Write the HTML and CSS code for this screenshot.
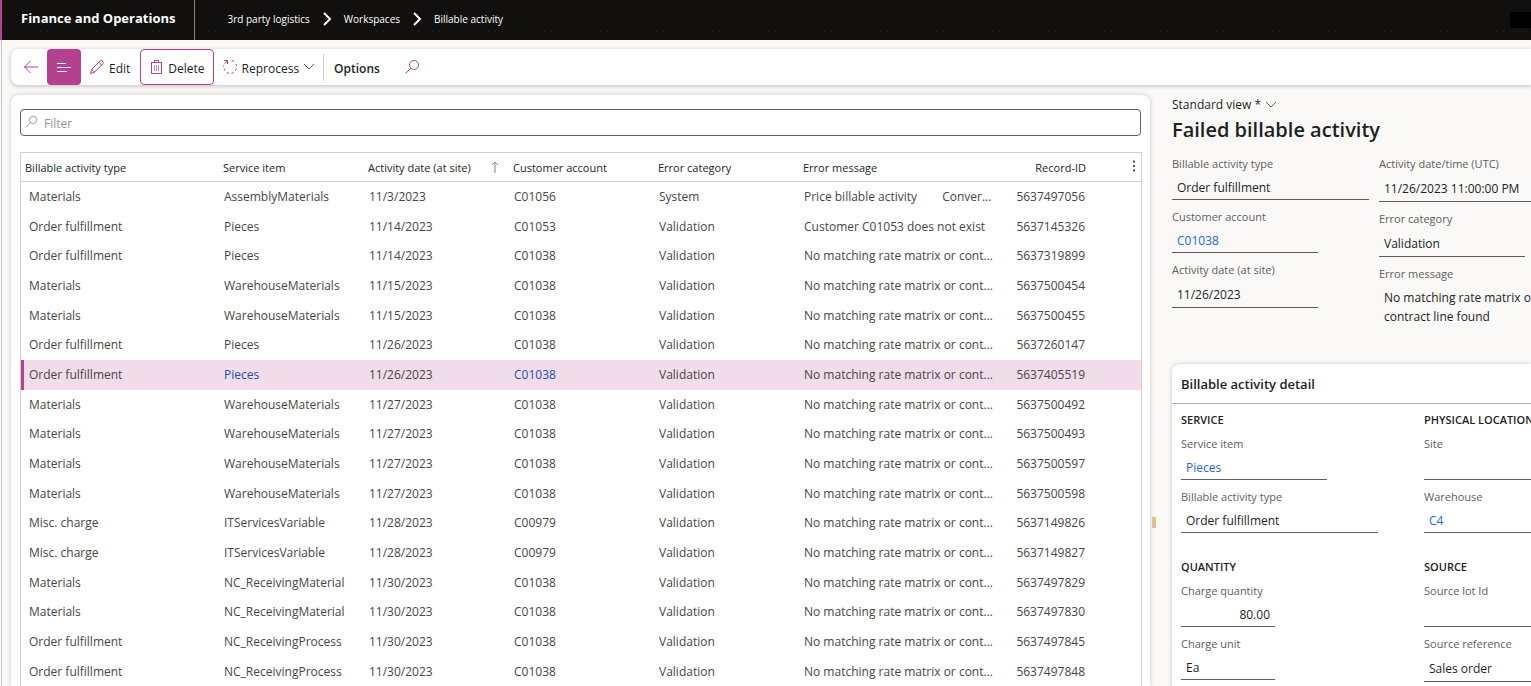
FILE: index.html
```html
<!DOCTYPE html>
<html lang="en">
<head>
  <meta charset="UTF-8" />
  <meta name="viewport" content="width=device-width, initial-scale=1.0" />
  <title>Billable activity</title>
  <link rel="stylesheet" href="styles.css">
</head>
<body>
  <header class="topbar">
    <div class="brand">Finance and Operations</div>
    <nav class="breadcrumb">
      <a href="#">3rd party logistics</a>
      <svg class="crumb-sep" viewBox="0 0 8 14"><path d="M1 1l6 6-6 6" /></svg>
      <a href="#">Workspaces</a>
      <svg class="crumb-sep" viewBox="0 0 8 14"><path d="M1 1l6 6-6 6" /></svg>
      <a href="#">Billable activity</a>
    </nav>
    <div class="account"></div>
  </header>

  <main class="page">
    <div class="toolbar">
      <button class="tool back" aria-label="Back">
        <svg class="icon" viewBox="0 0 16 16"><path d="M1 8h14M7.500 2L1.500 8l6 6" /></svg>
      </button>
      <button class="tool list-toggle" aria-label="Show list">
        <svg class="icon" viewBox="0 0 16 16"><path d="M1 4.500h9M1 8.500h14M1 12.500h10" /></svg>
      </button>
      <button class="tool edit">
        <svg class="icon" viewBox="0 0 16 16"><path d="M1.500 14.500l1.200-4.200 8.300-8.300q1.300-1.100 2.600.1t.3 2.700l-8.300 8.300zM9.800 3.200l3 3M2.700 10.300l2.900 2.900" /></svg>
        Edit
      </button>
      <button class="tool delete">
        <svg class="icon" viewBox="0 0 16 16"><path d="M3 3.500h11M6.500 3.500v-2h4v2M3.500 3.500v11h10v-11" /><path class="thin" d="M6.500 6v6M8.500 6v6M10.500 6v6" /></svg>
        Delete
      </button>
      <button class="tool reprocess">
        <svg class="icon" viewBox="0 0 16 16"><path d="M2 1.500h3.500v3.500M5.500 1.500L2.500 4.500M10 1.500l2 1M14 5l.500 2M14.500 9.500l-1 2M11.500 13.500l-2 1M7 14.500l-2-1M3 11.500l-1-2M1.500 7.500v-1" /></svg>
        Reprocess
        <svg class="chevron" viewBox="0 0 12 8"><path d="M1 1l5 5 5-5" /></svg>
      </button>
      <span class="divider"></span>
      <button class="tool options">Options</button>
      <button class="tool search" aria-label="Search">
        <svg class="icon" viewBox="0 0 16 16"><circle cx="10" cy="6" r="4.500" /><path d="M6.800 9.200L1.500 14.500" /></svg>
      </button>
    </div>

    <div class="content">
      <section class="list">
        <div class="filter">
          <svg class="icon" viewBox="0 0 16 16"><circle cx="10" cy="6" r="4.500" /><path d="M6.800 9.200L1.500 14.500" /></svg>
          <input type="text" placeholder="Filter" aria-label="Filter" />
        </div>
        <table class="grid">
          <colgroup>
            <col class="col-type" /><col class="col-item" /><col class="col-date" /><col class="col-account" />
            <col class="col-category" /><col class="col-message" /><col class="col-record" /><col class="col-menu" />
          </colgroup>
          <thead>
            <tr>
              <th>Billable activity type</th>
              <th>Service item</th>
              <th>
                <div class="sorted">Activity date (at site)
                  <svg class="sort" viewBox="0 0 8 12"><path d="M4 12V1M1 4l3-3 3 3" /></svg>
                </div>
              </th>
              <th>Customer account</th>
              <th>Error category</th>
              <th>Error message</th>
              <th class="num">Record-ID</th>
              <th class="menu">
                <button class="more" aria-label="Grid options">
                  <svg viewBox="0 0 4 12"><circle cx="2" cy="1.500" r="1" /><circle cx="2" cy="6" r="1" /><circle cx="2" cy="10.500" r="1" /></svg>
                </button>
              </th>
            </tr>
          </thead>
          <tbody>
            <tr><td>Materials</td><td>AssemblyMaterials</td><td>11/3/2023</td><td>C01056</td><td>System</td><td><span class="source">Price billable activity</span>Conver...</td><td class="num">5637497056</td><td></td></tr>
            <tr><td>Order fulfillment</td><td>Pieces</td><td>11/14/2023</td><td>C01053</td><td>Validation</td><td>Customer C01053 does not exist</td><td class="num">5637145326</td><td></td></tr>
            <tr><td>Order fulfillment</td><td>Pieces</td><td>11/14/2023</td><td>C01038</td><td>Validation</td><td>No matching rate matrix or cont...</td><td class="num">5637319899</td><td></td></tr>
            <tr><td>Materials</td><td>WarehouseMaterials</td><td>11/15/2023</td><td>C01038</td><td>Validation</td><td>No matching rate matrix or cont...</td><td class="num">5637500454</td><td></td></tr>
            <tr><td>Materials</td><td>WarehouseMaterials</td><td>11/15/2023</td><td>C01038</td><td>Validation</td><td>No matching rate matrix or cont...</td><td class="num">5637500455</td><td></td></tr>
            <tr><td>Order fulfillment</td><td>Pieces</td><td>11/26/2023</td><td>C01038</td><td>Validation</td><td>No matching rate matrix or cont...</td><td class="num">5637260147</td><td></td></tr>
            <tr class="selected"><td>Order fulfillment</td><td><a href="#">Pieces</a></td><td>11/26/2023</td><td><a href="#">C01038</a></td><td>Validation</td><td>No matching rate matrix or cont...</td><td class="num">5637405519</td><td></td></tr>
            <tr><td>Materials</td><td>WarehouseMaterials</td><td>11/27/2023</td><td>C01038</td><td>Validation</td><td>No matching rate matrix or cont...</td><td class="num">5637500492</td><td></td></tr>
            <tr><td>Materials</td><td>WarehouseMaterials</td><td>11/27/2023</td><td>C01038</td><td>Validation</td><td>No matching rate matrix or cont...</td><td class="num">5637500493</td><td></td></tr>
            <tr><td>Materials</td><td>WarehouseMaterials</td><td>11/27/2023</td><td>C01038</td><td>Validation</td><td>No matching rate matrix or cont...</td><td class="num">5637500597</td><td></td></tr>
            <tr><td>Materials</td><td>WarehouseMaterials</td><td>11/27/2023</td><td>C01038</td><td>Validation</td><td>No matching rate matrix or cont...</td><td class="num">5637500598</td><td></td></tr>
            <tr><td>Misc. charge</td><td>ITServicesVariable</td><td>11/28/2023</td><td>C00979</td><td>Validation</td><td>No matching rate matrix or cont...</td><td class="num">5637149826</td><td></td></tr>
            <tr><td>Misc. charge</td><td>ITServicesVariable</td><td>11/28/2023</td><td>C00979</td><td>Validation</td><td>No matching rate matrix or cont...</td><td class="num">5637149827</td><td></td></tr>
            <tr><td>Materials</td><td>NC_ReceivingMaterial</td><td>11/30/2023</td><td>C01038</td><td>Validation</td><td>No matching rate matrix or cont...</td><td class="num">5637497829</td><td></td></tr>
            <tr><td>Materials</td><td>NC_ReceivingMaterial</td><td>11/30/2023</td><td>C01038</td><td>Validation</td><td>No matching rate matrix or cont...</td><td class="num">5637497830</td><td></td></tr>
            <tr><td>Order fulfillment</td><td>NC_ReceivingProcess</td><td>11/30/2023</td><td>C01038</td><td>Validation</td><td>No matching rate matrix or cont...</td><td class="num">5637497845</td><td></td></tr>
            <tr><td>Order fulfillment</td><td>NC_ReceivingProcess</td><td>11/30/2023</td><td>C01038</td><td>Validation</td><td>No matching rate matrix or cont...</td><td class="num">5637497848</td><td></td></tr>
          </tbody>
        </table>
      </section>

      <div class="splitter"><span class="grip"></span></div>

      <section class="details">
        <button class="view">Standard view *
          <svg class="chevron" viewBox="0 0 12 8"><path d="M1 1l5 5 5-5" /></svg>
        </button>
        <h1>Failed billable activity</h1>
        <div class="summary">
          <div class="fields">
            <div class="field wide">
              <label for="sumType">Billable activity type</label>
              <input type="text" id="sumType" value="Order fulfillment" readonly />
            </div>
            <div class="field">
              <span class="label" id="sumAccount">Customer account</span>
              <a class="value" href="#" aria-describedby="sumAccount">C01038</a>
            </div>
            <div class="field tall">
              <label for="sumDate">Activity date (at site)</label>
              <input type="text" id="sumDate" value="11/26/2023" readonly />
            </div>
          </div>
          <div class="fields tall">
            <div class="field wide">
              <label for="sumTime">Activity date/time (UTC)</label>
              <input type="text" id="sumTime" value="11/26/2023 11:00:00 PM" readonly />
            </div>
            <div class="field">
              <label for="sumCategory">Error category</label>
              <input type="text" id="sumCategory" value="Validation" readonly />
            </div>
            <div class="field wide">
              <label for="sumMessage">Error message</label>
              <textarea id="sumMessage" rows="2" readonly>No matching rate matrix or contract line found</textarea>
            </div>
          </div>
        </div>

        <div class="card">
          <h2>Billable activity detail</h2>
          <div class="groups">
            <div class="fields">
              <h3>SERVICE</h3>
              <div class="field">
                <span class="label" id="detItem">Service item</span>
                <a class="value" href="#" aria-describedby="detItem">Pieces</a>
              </div>
              <div class="field wide">
                <label for="detType">Billable activity type</label>
                <input type="text" id="detType" value="Order fulfillment" readonly />
              </div>
            </div>
            <div class="fields">
              <h3>PHYSICAL LOCATION</h3>
              <div class="field">
                <label for="detSite">Site</label>
                <input type="text" id="detSite" readonly />
              </div>
              <div class="field">
                <span class="label" id="detWarehouse">Warehouse</span>
                <a class="value" href="#" aria-describedby="detWarehouse">C4</a>
              </div>
            </div>
            <div class="fields">
              <h3>QUANTITY</h3>
              <div class="field short">
                <label for="detQty">Charge quantity</label>
                <input type="text" class="num" id="detQty" value="80.00" readonly />
              </div>
              <div class="field short">
                <label for="detUnit">Charge unit</label>
                <input type="text" id="detUnit" value="Ea" readonly />
              </div>
            </div>
            <div class="fields">
              <h3>SOURCE</h3>
              <div class="field">
                <label for="detLot">Source lot Id</label>
                <input type="text" id="detLot" readonly />
              </div>
              <div class="field tall">
                <label for="detRef">Source reference</label>
                <input type="text" id="detRef" value="Sales order" readonly />
              </div>
            </div>
          </div>
        </div>
      </section>
    </div>
  </main>
</body>
</html>
```
FILE: styles.css
```css
:root {
  --accent: #b4408f;
  --accent-light: #f1dcea;
  --page-bg: #faf9f8;
  --text: #201f1e;
  --label: #605e5c;
  --line: #d2d0ce;
  --link: #2266e3;
}

* {
  margin: 0;
  padding: 0;
  box-sizing: border-box;
}

body {
  display: flex;
  flex-direction: column;
  height: 100vh;
  overflow: hidden;
  background: var(--page-bg);
  color: var(--text);
  font-family: "Open Sans", "Noto Sans", sans-serif;
  font-size: 12px;
  line-height: 16px;
}

button, input, textarea {
  border: none;
  background: transparent;
  color: inherit;
  font: inherit;
  outline: none;
}

button {
  cursor: pointer;
}

a {
  color: var(--link);
  text-decoration: none;
}

svg {
  flex: none;
  fill: none;
  stroke: currentColor;
}

.icon {
  width: 16px;
  height: 16px;
}

.chevron {
  width: 12px;
  height: 8px;
}

/* Top bar */
.topbar {
  display: flex;
  align-items: center;
  flex: none;
  height: 40px;
  border-left: 2px solid var(--accent);
  background-color: #11100f;
  background-image: radial-gradient(circle, #1e1d1c 1px, transparent 1px);
  background-size: 7px 8px;
  background-position: 0 27px;
  background-repeat: repeat-x;
  color: #fff;
}

.brand {
  height: 40px;
  padding: 0 19px;
  border-right: 1px solid #8a8886;
  font-size: 13px;
  font-weight: 700;
  line-height: 36px;
  white-space: nowrap;
}

.breadcrumb {
  display: flex;
  align-items: center;
  gap: 12px;
  padding: 0 0 2px 32px;
  font-size: 10px;
}

.breadcrumb a {
  color: #fff;
}

.crumb-sep {
  width: 10px;
  height: 14px;
  stroke-width: 2;
}

.account {
  width: 21px;
  height: 16px;
  margin-left: auto;
  background: #000;
}

/* Toolbar */
.page {
  display: flex;
  flex-direction: column;
  flex: 1;
  min-height: 0;
  margin-left: 1px;
  padding: 9px 0 0 9px;
  border-left: 1px solid #c8c6c4;
}

.toolbar {
  display: flex;
  align-items: center;
  flex: none;
  height: 36px;
  border-radius: 8px 0 0 8px;
  background: #fff;
  box-shadow: 0 1px 4px rgba(0,0,0,0.25);
}

.tool {
  display: flex;
  align-items: center;
  height: 36px;
  gap: 4px;
  padding: 3px 8px 0;
  color: var(--text);
}

.tool svg {
  margin-bottom: 3px;
}

.tool .icon {
  color: var(--accent);
}

.tool .chevron {
  color: #605e5c;
}

.thin {
  opacity: 0.6;
}

.back {
  padding-left: 12px;
}

.list-toggle {
  padding: 3px 9px 0;
  border-radius: 4px;
  background: var(--accent);
}

.list-toggle .icon {
  color: #fff;
}

.edit {
  padding-right: 10px;
}

.delete {
  padding: 3px 8px 0 7px;
  border: 1px solid var(--accent);
  border-radius: 4px;
}

.divider {
  height: 27px;
  border-left: 1px solid var(--line);
}

.options {
  padding: 3px 10px 0;
  font-weight: 600;
}

.search {
  padding-left: 14px;
}

/* List */
.content {
  display: flex;
  flex: 1;
  min-height: 0;
  padding-top: 10px;
}

.list {
  flex: 1;
  min-width: 0;
  padding: 14px 8px 0 9px;
  border-radius: 8px 8px 0 0;
  background: #fff;
  box-shadow: 0 0 5px rgba(0,0,0,0.2);
}

.filter {
  display: flex;
  align-items: center;
  gap: 6px;
  height: 27px;
  margin-right: 1px;
  padding: 0 4px;
  border: 1px solid #605e5c;
  border-radius: 4px;
}

.filter .icon {
  width: 13px;
  height: 13px;
  margin-bottom: 3px;
  color: #8a8886;
}

.filter input {
  flex: 1;
  padding-top: 2px;
}

.filter input::placeholder {
  color: #979593;
}

.grid {
  width: 100%;
  margin-top: 16px;
  border: 1px solid var(--line);
  border-collapse: separate;
  border-spacing: 0;
  table-layout: fixed;
}

.col-type {
  width: 198px;
}

.col-item, .col-date, .col-account, .col-category {
  width: 145px;
}

.col-record {
  width: 93px;
}

.col-menu {
  width: 51px;
}

.grid th {
  height: 29px;
  padding: 2px 4px 0;
  border-bottom: 1px solid var(--line);
  font-size: 11px;
  font-weight: 400;
  text-align: left;
  white-space: nowrap;
}

.grid td {
  height: 30px;
  padding: 0 5px;
  overflow: hidden;
  color: #484644;
  white-space: nowrap;
}

.grid tr:nth-child(3n+2) td {
  height: 29px;
}

.grid td:first-child {
  padding-left: 8px;
}

.grid .num {
  text-align: right;
}

.sorted {
  display: flex;
  align-items: center;
  justify-content: space-between;
  padding-right: 6px;
}

.sort {
  width: 8px;
  height: 12px;
  margin-bottom: 2px;
  color: #8a8886;
}

.grid .menu {
  text-align: right;
}

.more {
  width: 6px;
  height: 12px;
}

.more svg {
  width: 4px;
  height: 12px;
  fill: var(--text);
  stroke: none;
}

.source {
  margin-right: 25px;
}

.selected td {
  background: var(--accent-light);
}

.selected td:first-child {
  box-shadow: inset 3px 0 0 var(--accent);
}

.selected a {
  color: #1b50b0;
}

/* Splitter */
.splitter {
  flex: none;
  width: 22px;
  padding: 422px 2px 0;
}

.grip {
  display: block;
  width: 4px;
  height: 11px;
  background: #e8bd8c;
}

/* Details */
.details {
  flex: none;
  width: 359px;
}

.view {
  display: flex;
  align-items: center;
  gap: 4px;
  height: 20px;
}

.view .chevron {
  color: #605e5c;
}

h1 {
  font-size: 20px;
  font-weight: 600;
  line-height: 30px;
  margin-bottom: 11px;
}

.summary {
  display: grid;
  grid-template-columns: 207px 1fr;
  min-height: 208px;
}

.fields {
  display: flex;
  flex-direction: column;
  gap: 9px;
}

.field {
  width: 146px;
}

.field.wide {
  width: 197px;
}

.field.short {
  width: 94px;
}

.field label, .field .label {
  display: block;
  color: var(--label);
  font-size: 11px;
  white-space: nowrap;
}

.field input, .field .value {
  display: block;
  width: 100%;
  height: 28px;
  padding: 3px 5px 0;
  border-bottom: 1px solid #605e5c;
  line-height: 24px;
}

.field .value {
  padding-top: 4px;
}

.tall input {
  height: 30px;
}

.field .num {
  text-align: right;
}

.field textarea {
  display: block;
  width: 170px;
  padding: 6px 5px 0;
  line-height: 19px;
  overflow: hidden;
  resize: none;
}

.card {
  height: 100%;
  border-radius: 8px 0 0 0;
  background: #fff;
  box-shadow: 0 0 4px rgba(0,0,0,0.2);
}

h2 {
  height: 40px;
  padding-left: 9px;
  border-bottom: 1px solid #b3b0ad;
  font-size: 13px;
  font-weight: 600;
  line-height: 40px;
}

.groups {
  display: grid;
  grid-template-columns: 243px 1fr;
  row-gap: 26px;
  padding: 8px 0 0 9px;
}

h3 {
  margin-bottom: -1px;
  font-size: 11px;
  font-weight: 600;
  white-space: nowrap;
}
```
